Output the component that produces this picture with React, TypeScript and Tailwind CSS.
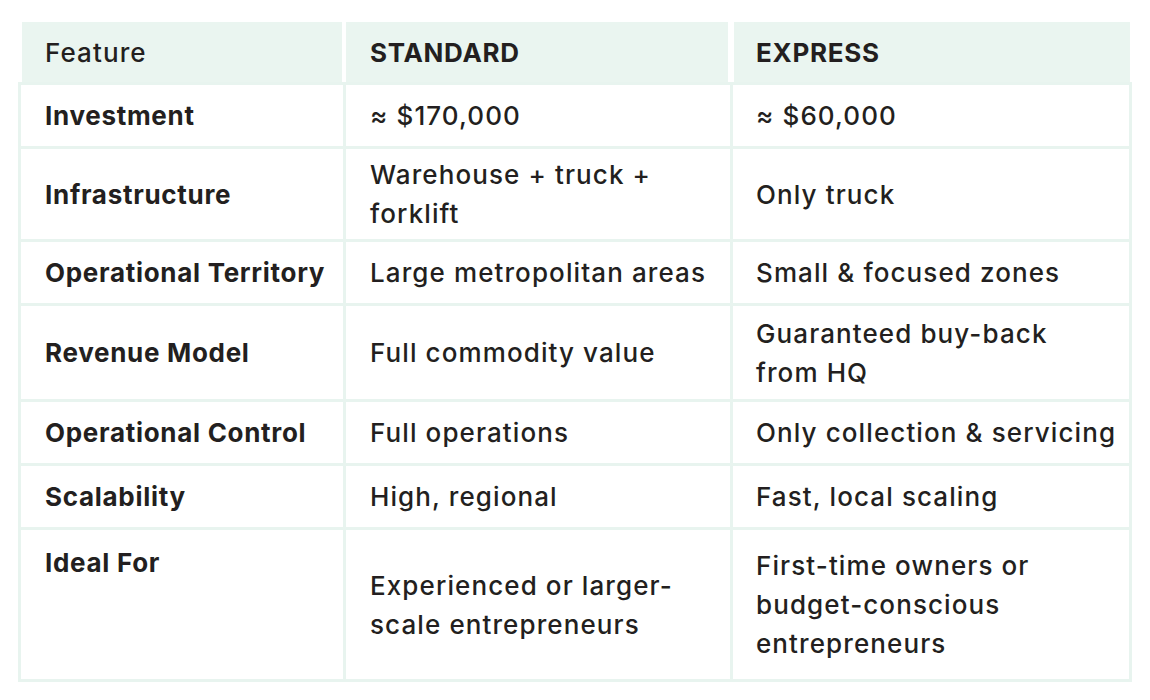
import React from "react";

const rows: { f: string; s: string[]; e: string[]; h: string; top?: boolean }[] = [
  { f: "Investment", s: ["≈ $170,000"], e: ["≈ $60,000"], h: "h-[64px]" },
  { f: "Infrastructure", s: ["Warehouse + truck +", "forklift"], e: ["Only truck"], h: "h-[93px]" },
  { f: "Operational Territory", s: ["Large metropolitan areas"], e: ["Small & focused zones"], h: "h-[64px]" },
  { f: "Revenue Model", s: ["Full commodity value"], e: ["Guaranteed buy-back", "from HQ"], h: "h-[96px]" },
  { f: "Operational Control", s: ["Full operations"], e: ["Only collection & servicing"], h: "h-[64px]" },
  { f: "Scalability", s: ["High, regional"], e: ["Fast, local scaling"], h: "h-[64px]" },
  {
    f: "Ideal For",
    s: ["Experienced or larger-", "scale entrepreneurs"],
    e: ["First-time owners or", "budget-conscious", "entrepreneurs"],
    h: "h-[149px]",
    top: true,
  },
];

function Lines({ l }: { l: string[] }) {
  return (
    <div>
      {l.map((t, i) => (
        <div key={i} className="whitespace-nowrap">
          {t}
        </div>
      ))}
    </div>
  );
}

export default function App() {
  return (
    <div
      className="w-[1150px] h-[700px] bg-white pt-[22px] pl-[18px] text-[#231f20] text-[26px] leading-[39px] font-medium tracking-[1.1px]"
      style={{ fontFamily: "Inter, 'Noto Sans', sans-serif" }}
    >
      <div className="w-[1114px]">
        <div className="flex h-[60px] pl-[4px]">
          <div className="w-[320px] bg-[#eaf5f0] flex items-center pl-[23px]">Feature</div>
          <div className="w-[382px] ml-[4px] bg-[#eaf5f0] flex items-center pl-[24px] font-bold tracking-[0.7px]">STANDARD</div>
          <div className="w-[396px] ml-[6px] bg-[#eaf5f0] flex items-center pl-[22px] font-bold tracking-[0.7px]">EXPRESS</div>
        </div>
        <div className="border-[3px] border-[#e8f4ef]">
          {rows.map((r, i) => (
            <div
              key={i}
              className={`grid grid-cols-[325px_387px_396px] ${r.h} ${i < rows.length - 1 ? "border-b-[3px] border-[#e8f4ef]" : ""}`}
            >
              <div
                className={`border-r-[3px] border-[#e8f4ef] pl-[24px] font-bold tracking-[0.7px] flex ${r.top ? "items-start pt-[13px]" : "items-center"}`}
              >
                {r.f}
              </div>
              <div className="border-r-[3px] border-[#e8f4ef] pl-[24px] flex items-center">
                <Lines l={r.s} />
              </div>
              <div className="pl-[23px] flex items-center">
                <Lines l={r.e} />
              </div>
            </div>
          ))}
        </div>
      </div>
    </div>
  );
}
